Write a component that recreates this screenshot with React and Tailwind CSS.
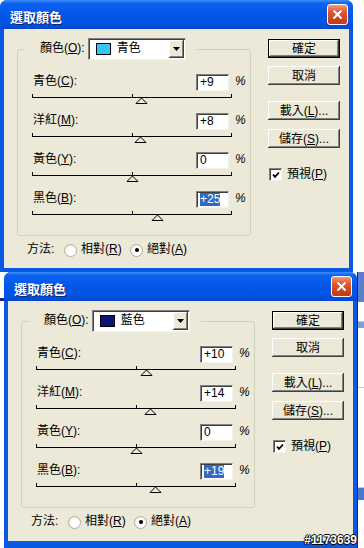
import React from "react";

const FONT = "font-['Liberation_Sans','Noto_Sans_CJK_TC',sans-serif]";

function Slider({ v }) {
  const cx = 100.5 + v;
  return (
    <svg width="202" height="13" className="block ml-[-1px]">
      <path d="M0.5 3V6.5H199.5V3M100.5 3V6.5" stroke="#000" fill="none" shapeRendering="crispEdges" />
      <polygon points={`${cx},7 ${cx + 5.5},12.5 ${cx - 5.5},12.5`} fill="#ece9d8" stroke="#000" strokeWidth="1" />
    </svg>
  );
}

function Field({ value, selected }) {
  return (
    <div className="w-[33px] h-[17px] bg-white border border-t-[#808080] border-l-[#808080] border-b-[#f4f3ee] border-r-[#f4f3ee] shadow-[inset_1px_1px_0_#404040] flex items-center pl-[3px] font-['Liberation_Sans',sans-serif] text-[12px] leading-[13px] text-black">
      {selected ? <span className="bg-[#316ac5] text-white">{value}</span> : <span>{value}</span>}
    </div>
  );
}

function Row({ label, k, value, v, selected }) {
  return (
    <div className="flex flex-col">
      <div className="flex items-center h-[17px]">
        <span className="w-[163px] -mt-[3px]">
          {label}(<span className="underline">{k}</span>):
        </span>
        <Field value={value} selected={selected} />
        <span className="ml-[6px] -mt-[3px] italic">%</span>
      </div>
      <Slider v={v} />
    </div>
  );
}

function Btn({ children, def }) {
  return def ? (
    <div className="w-[72px] h-[19px] border border-black bg-[#ece9d8] shadow-[inset_-1px_-1px_0_#404040,inset_1px_1px_0_#fff,inset_-2px_-2px_0_#808080] flex items-center justify-center">
      {children}
    </div>
  ) : (
    <div className="w-[72px] h-[19px] bg-[#ece9d8] shadow-[inset_-1px_-1px_0_#404040,inset_1px_1px_0_#fff,inset_-2px_-2px_0_#808080] flex items-center justify-center">
      {children}
    </div>
  );
}

function Radio({ on }) {
  return (
    <div className="w-[13px] h-[13px] rounded-full border border-[#b0ae9e] bg-[radial-gradient(circle_at_60%_60%,#ffffff_40%,#e4e2d6_100%)] flex items-center justify-center">
      {on ? <div className="w-[4px] h-[4px] rounded-full bg-black" /> : null}
    </div>
  );
}

function CloseBtn() {
  return (
    <div className="w-[21px] h-[21px] rounded-[3px] border border-white bg-[linear-gradient(180deg,#f39a7e_0%,#e2582f_35%,#d0421c_75%,#c4391a_100%)] flex items-center justify-center">
      <svg width="11" height="11">
        <path d="M1.5 1.5L9.5 9.5M9.5 1.5L1.5 9.5" stroke="#fff" strokeWidth="2" />
      </svg>
    </div>
  );
}

function Dialog({ colorName, swatch, rows, tall }) {
  return (
    <div
      className={
        tall
          ? "w-[353px] h-[276px] flex flex-col bg-[#0a58e4] rounded-t-[7px] overflow-hidden shrink-0"
          : "w-[353px] h-[272px] flex flex-col bg-[#0a58e4] rounded-t-[7px] overflow-hidden shrink-0"
      }
    >
      <div className="h-[29px] shrink-0 flex items-center pl-[10px] pr-[5px] bg-[linear-gradient(180deg,#3d8ef8_0%,#0b62f2_12%,#0458e8_45%,#0254e2_80%,#0246cc_100%)]">
        <span className="font-['Noto_Sans_CJK_TC',sans-serif] font-bold text-[13px] leading-[15px] text-white [text-shadow:1px_1px_0_#0b2578] mt-[3px]">
          選取顏色
        </span>
        <div className="ml-auto">
          <CloseBtn />
        </div>
      </div>
      <div className={tall ? "mx-[4px] h-[240px] shrink-0 bg-[#ece9d8] flex pl-[13px] pt-[9px]" : "mx-[4px] h-[239px] shrink-0 bg-[#ece9d8] flex pl-[13px] pt-[9px]"}>
        <div className="w-[234px] flex flex-col">
          <fieldset className="h-[198px] border border-[#d0d0bf] rounded-[3px]">
            <legend className="ml-[7px] pl-[15px] pr-[11px]">
              <div className="flex items-center h-[22px]">
                <span className="-mt-[2px]">
                  顏色(<span className="underline">O</span>):
                </span>
                <div className="ml-[3px] w-[98px] h-[22px] bg-white border border-t-[#808080] border-l-[#808080] border-b-[#f4f3ee] border-r-[#f4f3ee] shadow-[inset_1px_1px_0_#404040] flex items-center">
                  <div className={"ml-[7px] w-[15px] h-[12px] border border-black " + swatch} />
                  <span className="ml-[6px] -mt-[2px]">{colorName}</span>
                  <div className="ml-auto mr-[1px] w-[15px] h-[18px] bg-[#ece9d8] shadow-[inset_-1px_-1px_0_#404040,inset_1px_1px_0_#fff,inset_-2px_-2px_0_#808080] flex items-center justify-center">
                    <svg width="7" height="4">
                      <path d="M0 0H7L3.5 4Z" fill="#000" />
                    </svg>
                  </div>
                </div>
              </div>
            </legend>
            <div className="pl-[15px] pt-[14px] flex flex-col gap-[9px]">
              {rows.map((r) => (
                <Row key={r.k} {...r} />
              ))}
            </div>
          </fieldset>
          <div className="mt-[5px] h-[18px] flex items-center pl-[10px]">
            <span className="w-[37px] -mt-[2px]">方法:</span>
            <Radio />
            <span className="ml-[4px] w-[38px] -mt-[2px] whitespace-nowrap">
              相對(<span className="underline">R</span>)
            </span>
            <div className="ml-[11px]">
              <Radio on />
            </div>
            <span className="ml-[4px] -mt-[2px] whitespace-nowrap">
              絕對(<span className="underline">A</span>)
            </span>
          </div>
        </div>
        <div className="ml-[17px] pt-[1px] flex flex-col">
          <Btn def>確定</Btn>
          <div className="mt-[8px]">
            <Btn>取消</Btn>
          </div>
          <div className="mt-[16px]">
            <Btn>
              載入(<span className="underline">L</span>)...
            </Btn>
          </div>
          <div className="mt-[9px]">
            <Btn>
              儲存(<span className="underline">S</span>)...
            </Btn>
          </div>
          <div className="mt-[20px] flex items-center pl-[1px]">
            <div className="w-[13px] h-[13px] bg-white border border-t-[#808080] border-l-[#808080] border-b-[#f4f3ee] border-r-[#f4f3ee] shadow-[inset_1px_1px_0_#404040] flex items-center justify-center">
              <svg width="8" height="8">
                <path d="M1 3.5L3 5.8L7 1.5" stroke="#000" strokeWidth="1.8" fill="none" />
              </svg>
            </div>
            <span className="ml-[5px] -mt-[2px]">
              預視(<span className="underline">P</span>)
            </span>
          </div>
        </div>
      </div>
    </div>
  );
}

const rows1 = [
  { label: "青色", k: "C", value: "+9", v: 9 },
  { label: "洋紅", k: "M", value: "+8", v: 8 },
  { label: "黃色", k: "Y", value: "0", v: 0 },
  { label: "黑色", k: "B", value: "+25", v: 25, selected: true },
];
const rows2 = [
  { label: "青色", k: "C", value: "+10", v: 10 },
  { label: "洋紅", k: "M", value: "+14", v: 14 },
  { label: "黃色", k: "Y", value: "0", v: 0 },
  { label: "黑色", k: "B", value: "+19", v: 19, selected: true },
];

export default function App() {
  return (
    <div className={"relative w-[364px] h-[548px] bg-white overflow-hidden text-[12px] leading-[14px] text-black " + FONT}>
      <Dialog colorName="青色" swatch="bg-[#35c6f4]" rows={rows1} />
      <div className="flex">
        <div className="w-[4px] shrink-0 flex flex-col">
          <div className="h-[26px]" />
          <div className="h-[3px] bg-[#1c2a6c]" />
        </div>
        <Dialog colorName="藍色" swatch="bg-[#0c1276]" rows={rows2} tall />
        <div className="w-[7px] shrink-0 flex flex-col border-l border-[#0a2a8c]">
          <div className="h-[30px] bg-[#5a7fd0]" />
          <div className="h-[20px] bg-white border-b border-[#c8c8c8]" />
          <div className="h-[6px] bg-[#7fa0d8]" />
          <div className="h-[60px] bg-white border-b border-[#c8c8c8]" />
          <div className="h-[100px] bg-white border-b border-[#c8c8c8]" />
          <div className="h-[12px] bg-[#4a7ad0]" />
          <div className="flex-1 bg-white" />
        </div>
      </div>
      <div className="absolute right-[7px] bottom-[2px] font-['Liberation_Sans',sans-serif] font-bold text-[12px] leading-[12px] text-white [text-shadow:1px_0_0_#000,-1px_0_0_#000,0_1px_0_#000,0_-1px_0_#000]">
        #1173639
      </div>
    </div>
  );
}
